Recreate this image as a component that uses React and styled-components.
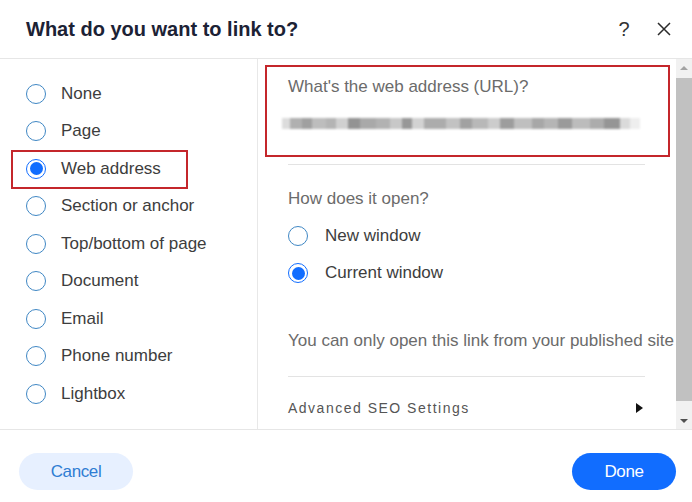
import * as React from "react";
import styled, { createGlobalStyle } from "styled-components";

const GlobalStyle = createGlobalStyle`
  html, body {
    margin: 0;
    padding: 0;
    background: #ffffff;
  }
  body {
    font-family: "Liberation Sans", Arial, sans-serif;
  }
`;

const Dialog = styled.div`
  width: 692px;
  height: 502px;
  background: #ffffff;
  display: flex;
  flex-direction: column;
  overflow: hidden;
`;

const Header = styled.header`
  height: 58px;
  flex: none;
  display: flex;
  align-items: center;
  justify-content: space-between;
  padding: 0 18px 0 26px;
  border-bottom: 1px solid #e6e6e6;
`;

const Title = styled.h1`
  margin: 0;
  font-size: 20px;
  font-weight: 700;
  color: #1c2235;
`;

const HeaderActions = styled.div`
  display: flex;
  align-items: center;
  gap: 20px;
`;

const IconButton = styled.button`
  border: none;
  background: transparent;
  padding: 0;
  width: 20px;
  height: 24px;
  display: flex;
  align-items: center;
  justify-content: center;
  color: #333333;
  font-family: "Liberation Sans", Arial, sans-serif;
  font-size: 20px;
  font-weight: 300;
  cursor: pointer;
`;

const Body = styled.div`
  height: 371px;
  flex: none;
  display: flex;
  border-bottom: 1px solid #e6e6e6;
  box-sizing: border-box;
`;

const Sidebar = styled.div`
  width: 258px;
  flex: none;
  border-right: 1px solid #e8e8e8;
  padding-top: 16px;
  box-sizing: border-box;
`;

const OptionRow = styled.label`
  position: relative;
  height: 37.5px;
  display: flex;
  align-items: center;
  gap: ${p => p.$gap}px;
  padding-left: ${p => p.$indent}px;
  font-size: 17px;
  color: #3d3d3d;
  cursor: pointer;

  ${p =>
    p.$highlight &&
    `
    &::after {
      content: "";
      position: absolute;
      left: 11px;
      width: 173px;
      top: 0;
      bottom: -1px;
      border: 2px solid #c4262b;
    }
  `}
`;

const RadioCircle = styled.span`
  width: 20px;
  height: 20px;
  flex: none;
  box-sizing: border-box;
  border-radius: 50%;
  border: 1.5px solid ${p => (p.$checked ? "#116dff" : "#3f87c4")};
  display: flex;
  align-items: center;
  justify-content: center;

  &::before {
    content: "";
    width: 13px;
    height: 13px;
    border-radius: 50%;
    background: #116dff;
    display: ${p => (p.$checked ? "block" : "none")};
  }
`;

const Panel = styled.div`
  flex: 1;
  display: flex;
  min-width: 0;
`;

const PanelContent = styled.div`
  flex: 1;
  overflow: hidden;
  white-space: nowrap;
`;

const UrlBox = styled.div`
  margin: 6px 6px 0 7px;
  height: 92px;
  box-sizing: border-box;
  border: 2px solid #c4262b;
  padding: 10px 0 0 21px;
`;

const FieldLabel = styled.div`
  font-size: 17px;
  line-height: 20px;
  color: #6b6b6b;
`;

const BlurredUrl = styled.div`
  margin-top: 21px;
  margin-left: -6px;
  display: flex;
  height: 11px;
  filter: blur(1px);
`;

const UrlChunk = styled.span`
  height: 100%;
  flex: none;
`;

const Divider = styled.div`
  height: 1px;
  background: #e3e3e3;
  margin: ${p => p.$top}px 31px 0 30px;
`;

const Section = styled.div`
  padding-left: 30px;
  margin-top: ${p => p.$top}px;
`;

const Note = styled.div`
  font-size: 17px;
  line-height: 20px;
  color: #6b6b6b;
`;

const SeoRow = styled.div`
  margin: 21px 33px 0 30px;
  height: 20px;
  display: flex;
  align-items: center;
  justify-content: space-between;
  font-size: 14px;
  letter-spacing: 1.5px;
  color: #555555;
`;

const Arrow = styled.span`
  width: 0;
  height: 0;
  border-top: 5px solid transparent;
  border-bottom: 5px solid transparent;
  border-left: 7px solid #111111;
`;

const Scrollbar = styled.div`
  width: 16px;
  flex: none;
  background: #f1f1f1;
  display: flex;
  flex-direction: column;
`;

const ScrollButton = styled.div`
  height: 17px;
  flex: none;
  display: flex;
  align-items: center;
  justify-content: center;

  &::before {
    content: "";
    width: 0;
    height: 0;
    border-left: 4px solid transparent;
    border-right: 4px solid transparent;
    ${p =>
      p.$down
        ? "border-top: 4px solid #505050;"
        : "border-bottom: 4px solid #a3a3a3;"}
  }
`;

const ScrollThumb = styled.div`
  height: 323px;
  margin: 2px 0 auto;
  background: #c1c1c1;
`;

const Footer = styled.footer`
  flex: 1;
  display: flex;
  align-items: flex-start;
  justify-content: space-between;
  padding: 23px 16px 0 19px;
`;

const Button = styled.button`
  height: 37px;
  width: ${p => p.$width}px;
  border: none;
  border-radius: 19px;
  font-family: "Liberation Sans", Arial, sans-serif;
  font-size: 17px;
  letter-spacing: -0.4px;
  background: ${p => (p.$primary ? "#116dff" : "#e7f0ff")};
  color: ${p => (p.$primary ? "#ffffff" : "#2f7dd3")};
  cursor: pointer;
`;

const linkTypes = [
  "None",
  "Page",
  "Web address",
  "Section or anchor",
  "Top/bottom of page",
  "Document",
  "Email",
  "Phone number",
  "Lightbox",
];

const urlChunks = [
  [8, "#dcdcdc"], [12, "#b0b0b0"], [10, "#a0a0a0"], [14, "#bdbdbd"], [10, "#b4b4b4"],
  [12, "#d0d0d0"], [12, "#939393"], [16, "#a9a9a9"], [14, "#b2b2b2"], [12, "#c8c8c8"],
  [10, "#979797"], [12, "#d2d2d2"], [22, "#acacac"], [14, "#c2c2c2"], [12, "#a1a1a1"],
  [16, "#b8b8b8"], [12, "#cccccc"], [14, "#9d9d9d"], [18, "#bfbfbf"], [12, "#a7a7a7"],
  [14, "#b5b5b5"], [14, "#9a9a9a"], [18, "#bcbcbc"], [14, "#acacac"], [16, "#959595"],
  [10, "#dadada"], [10, "#eeeeee"],
];

const CloseIcon = () => (
  <svg width="16" height="16" viewBox="0 0 16 16" fill="none">
    <path d="M2 2L14 14M14 2L2 14" stroke="#2b2b2b" strokeWidth="1.5" />
  </svg>
);

const Radio = ({ label, checked, highlight, indent, gap }) => (
  <OptionRow $highlight={highlight} $indent={indent} $gap={gap}>
    <RadioCircle $checked={checked} />
    <span>{label}</span>
  </OptionRow>
);

export default function App() {
  return (
    <>
      <GlobalStyle />
      <Dialog>
        <Header>
          <Title>What do you want to link to?</Title>
          <HeaderActions>
            <IconButton>?</IconButton>
            <IconButton>
              <CloseIcon />
            </IconButton>
          </HeaderActions>
        </Header>
        <Body>
          <Sidebar>
            {linkTypes.map(t => (
              <Radio
                key={t}
                label={t}
                indent={26}
                gap={15}
                checked={t === "Web address"}
                highlight={t === "Web address"}
              />
            ))}
          </Sidebar>
          <Panel>
            <PanelContent>
              <UrlBox>
                <FieldLabel>What's the web address (URL)?</FieldLabel>
                <BlurredUrl>
                  {urlChunks.map(([w, c], i) => (
                    <UrlChunk key={i} style={{ width: w, background: c }} />
                  ))}
                </BlurredUrl>
              </UrlBox>
              <Divider $top={7} />
              <Section $top={24}>
                <Note>How does it open?</Note>
              </Section>
              <Section $top={8}>
                <Radio label="New window" indent={0} gap={17} />
                <Radio label="Current window" indent={0} gap={17} checked />
              </Section>
              <Section $top={39}>
                <Note>You can only open this link from your published site</Note>
              </Section>
              <Divider $top={25} />
              <SeoRow>
                <span>Advanced SEO Settings</span>
                <Arrow />
              </SeoRow>
            </PanelContent>
            <Scrollbar>
              <ScrollButton />
              <ScrollThumb />
              <ScrollButton $down />
            </Scrollbar>
          </Panel>
        </Body>
        <Footer>
          <Button $width={114}>Cancel</Button>
          <Button $width={104} $primary>
            Done
          </Button>
        </Footer>
      </Dialog>
    </>
  );
}
